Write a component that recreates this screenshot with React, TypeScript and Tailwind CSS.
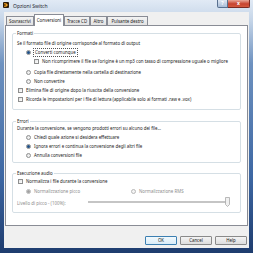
import React from "react";

type Kind = "check" | "radio";

function Check({ checked = false, disabled = false }: { checked?: boolean; disabled?: boolean }) {
  return (
    <span
      className={`inline-flex h-[5px] w-[5px] shrink-0 items-center justify-center border ${
        disabled ? "border-[#b8b8b8] bg-[#f4f4f4]" : "border-[#8e8f8f] bg-[linear-gradient(135deg,#e2e2e2,#ffffff)]"
      }`}
    >
      {checked && <span className="h-[2px] w-[2px] bg-[#2a4d7f]" />}
    </span>
  );
}

function Radio({ checked = false, disabled = false }: { checked?: boolean; disabled?: boolean }) {
  return (
    <span
      className={`inline-flex h-[5px] w-[5px] shrink-0 items-center justify-center rounded-full border ${
        disabled ? "border-[#b8b8b8] bg-[#f4f4f4]" : "border-[#8e8f8f] bg-[linear-gradient(135deg,#dcdcdc,#ffffff)]"
      }`}
    >
      {checked && (
        <span className={`h-[3px] w-[3px] rounded-full ${disabled ? "bg-[#a0a0a0]" : "bg-[#1d4f86]"}`} />
      )}
    </span>
  );
}

function Option({
  kind,
  label,
  indent,
  checked,
  disabled,
  focused,
  className = "",
}: {
  kind: Kind;
  label: string;
  indent: string;
  checked?: boolean;
  disabled?: boolean;
  focused?: boolean;
  className?: string;
}) {
  return (
    <div className={`flex h-[9px] items-center gap-[2px] ${indent} ${className}`}>
      {kind === "check" ? <Check checked={checked} disabled={disabled} /> : <Radio checked={checked} disabled={disabled} />}
      <span
        className={`whitespace-nowrap leading-[7px] ${disabled ? "text-[#8c8c8c]" : "text-[#1b1b1b]"} ${
          focused ? "border border-dotted border-[#555] px-[1px]" : "px-[1px]"
        }`}
      >
        {label}
      </span>
    </div>
  );
}

function Group({ title, className = "", children }: { title: string; className?: string; children: React.ReactNode }) {
  return (
    <fieldset className={`mx-[6px] rounded-[2px] border border-[#d5dfe5] ${className}`}>
      <legend className="ml-[3px] px-[1px] leading-[6px] text-[#1b1b1b]">{title}</legend>
      {children}
    </fieldset>
  );
}

const tabs = [
  { label: "Sovrascrivi", w: "w-[28px]" },
  { label: "Conversioni", w: "w-[30px]", active: true },
  { label: "Tracce CD", w: "w-[26px]" },
  { label: "Altro", w: "w-[17px]" },
  { label: "Pulsante destro", w: "w-[41px]" },
];

function Button({ label, primary }: { label: string; primary?: boolean }) {
  return (
    <div
      className={`flex h-[9px] w-[32px] items-center justify-center rounded-[1px] border text-[#1b1b1b] ${
        primary
          ? "border-[#3c7fb1] bg-[linear-gradient(180deg,#f2f9fd,#d9ecf8)]"
          : "border-[#8a8a8a] bg-[linear-gradient(180deg,#f4f4f4,#dddddd)]"
      }`}
    >
      {label}
    </div>
  );
}

export default function App() {
  return (
    <div className="flex h-[253px] w-[253px] flex-col overflow-hidden bg-[linear-gradient(180deg,#e1eaf5_0%,#c5d5e8_8%,#6e92c0_25%,#3d67a3_70%,#1e3c6e_100%)] font-['Noto_Sans',sans-serif] text-[4.4px]">
      {/* title bar */}
      <div className="flex h-[12px] shrink-0 items-start">
        <svg viewBox="0 0 6 6" className="ml-[3px] mt-[2px] h-[6px] w-[6px]">
          <rect width="6" height="6" rx="1" fill="#2a1a0a" />
          <path d="M1 1.2 L3.3 1.2 L5 3 L3.3 4.8 L1 4.8 Z" fill="#f2a11f" />
          <rect x="1.2" y="2.2" width="1.3" height="1.6" fill="#2a1a0a" />
        </svg>
        <span className="ml-[4px] mt-[3px] text-[5px] leading-[6px] text-[#1e2530]">Opzioni Switch</span>
        <div className="ml-auto mr-[3px] flex">
          <div className="flex h-[8px] w-[11px] items-center justify-center rounded-bl-[2px] border border-t-0 border-[#58708f] bg-[linear-gradient(180deg,#dde6f1,#a9bdd8)] text-[5px] font-bold leading-none text-white">
            ?
          </div>
          <div className="flex h-[8px] w-[22px] items-center justify-center rounded-br-[2px] border border-l-0 border-t-0 border-[#7a2a22] bg-[linear-gradient(180deg,#e9a899,#c7432f_55%,#d2593f)] text-[5px] font-bold leading-none text-white">
            x
          </div>
        </div>
      </div>

      {/* client area */}
      <div className="mx-[4px] flex h-[236px] shrink-0 flex-col bg-[#f0f0f0] px-[1px] pt-[2px]">
        {/* tabs */}
        <div className="flex h-[11px] items-end pl-[1px]">
          {tabs.map((t) =>
            t.active ? (
              <div
                key={t.label}
                className={`relative z-10 -mb-px flex h-[12px] ${t.w} items-center justify-center border border-b-0 border-[#898c95] bg-white text-[#1b1b1b]`}
              >
                {t.label}
              </div>
            ) : (
              <div
                key={t.label}
                className={`flex h-[9px] ${t.w} items-center justify-center border border-b-0 border-[#898c95] bg-[linear-gradient(180deg,#f3f3f3,#e2e2e2)] text-[#1b1b1b]`}
              >
                {t.label}
              </div>
            )
          )}
        </div>

        {/* panel */}
        <div className="flex h-[201px] flex-col border border-[#898c95] bg-white">
          <Group title="Formati" className="mt-[4px] pb-[5px] pt-[3px]">
            <div className="flex h-[9px] items-center pl-[4px] leading-[7px] text-[#1b1b1b]">
              Se il formato file di origine corrisponde al formato di output
            </div>
            <Option kind="radio" indent="pl-[13px]" label="Converti comunque" checked focused />
            <Option
              kind="check"
              indent="pl-[21px]"
              label="Non ricomprimere il file se l'origine è un mp3 con tasso di compressione uguale o migliore"
            />
            <Option kind="radio" indent="pl-[13px]" className="mt-[2px]" label="Copia file direttamente nella cartella di destinazione" />
            <Option kind="radio" indent="pl-[13px]" label="Non convertire" />
            <Option kind="check" indent="pl-[5px]" label="Elimina file di origine dopo la riuscita della conversione" />
            <Option
              kind="check"
              indent="pl-[5px]"
              label="Ricorda le impostazioni per i file di lettura (applicabile solo ai formati .raw e .vox)"
            />
          </Group>

          <Group title="Errori" className="mt-[8px] pb-[2px]">
            <div className="flex h-[9px] items-center pl-[4px] leading-[7px] text-[#1b1b1b]">
              Durante la conversione, se vengono prodotti errori su alcuno dei file...
            </div>
            <Option kind="radio" indent="pl-[13px]" label="Chiedi quale azione si desidera effettuare" />
            <Option kind="radio" indent="pl-[13px]" label="Ignora errori e continua la conversione degli altri file" checked />
            <Option kind="radio" indent="pl-[13px]" label="Annulla conversioni file" />
          </Group>

          <Group title="Esecuzione audio" className="mt-[7px] pb-[4px] pt-[1px]">
            <Option kind="check" indent="pl-[5px]" label="Normalizza i file durante la conversione" />
            <div className="mt-[1px] flex">
              <Option kind="radio" indent="pl-[13px]" className="w-[118px]" label="Normalizzazione picco" checked disabled />
              <Option kind="radio" indent="" label="Normalizzazione RMS" disabled />
            </div>
            <div className="mt-[3px] flex h-[9px] items-center pl-[4px]">
              <span className="whitespace-nowrap leading-[7px] text-[#8c8c8c]">Livello di picco - (100%):</span>
              <div className="ml-auto mr-[10px] flex h-[9px] w-[142px] -translate-y-[2px] items-center">
                <div className="h-[2px] flex-1 border border-[#c5c5c5] bg-[#e7e7e7]" />
                <svg viewBox="0 0 5 10" className="-ml-[1px] h-[10px] w-[5px]">
                  <path d="M0.5 0.5 H4.5 V7.5 L2.5 9.5 L0.5 7.5 Z" fill="#f0f0f0" stroke="#a8a8a8" strokeWidth="0.8" />
                </svg>
              </div>
            </div>
          </Group>
        </div>

        {/* buttons */}
        <div className="mt-[10px] flex justify-end gap-[3px] pr-[1px]">
          <Button label="OK" primary />
          <Button label="Cancel" />
          <Button label="Help" />
        </div>
      </div>
    </div>
  );
}
